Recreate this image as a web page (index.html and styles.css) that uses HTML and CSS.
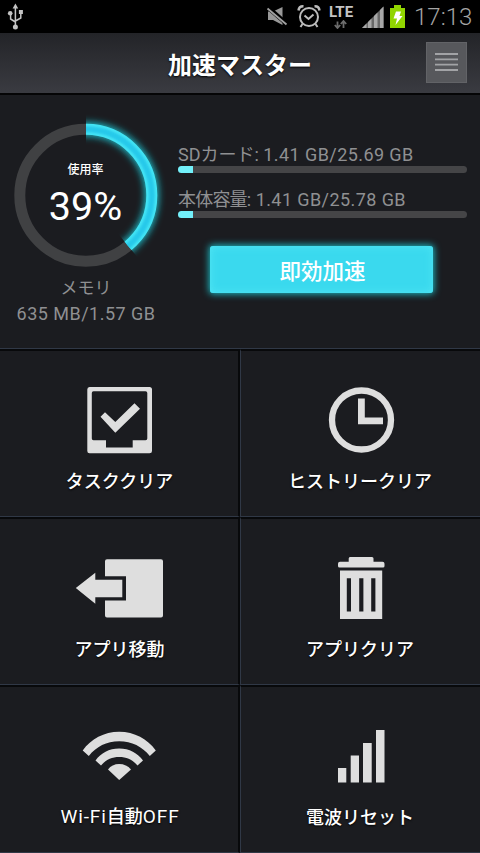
FILE: index.html
```html
<!DOCTYPE html>
<html lang="ja">
<head>
<meta charset="utf-8">
<title>加速マスター</title>
<link rel="stylesheet" href="styles.css">
</head>
<body>
<div class="screen">
  <div class="status">
    <svg class="usb" viewBox="6 2 20 29" width="20" height="29">
      <g fill="none" stroke="#c4c4c4" stroke-width="1.5">
        <path d="M15.4 7V26M15.4 22L10.6 19V14M15.4 21L20.8 18V13"/>
      </g>
      <g fill="#c4c4c4"><path d="M15.4 3.6L18.2 8.6H12.6Z"/><circle cx="10.2" cy="13.2" r="2.3"/><rect x="18.9" y="10" width="4" height="4"/><circle cx="15.4" cy="27" r="2.5"/></g>
    </svg>
    <div class="status-icons">
      <svg viewBox="266 4 22 24" width="22" height="24">
        <path d="M268 11.5H273L282.5 7V25L273 20H268Z" fill="#989898"/>
        <path d="M268 7.5L287 24" stroke="#000" stroke-width="4.5"/>
        <path d="M267.5 8.5L286.5 24.5" stroke="#a2a2a2" stroke-width="1.8"/>
      </svg>
      <svg class="alarm" viewBox="297 4 24 25" width="24" height="25">
        <g fill="none" stroke="#bcbcbc" stroke-width="2">
          <circle cx="309" cy="17" r="9"/><path d="M304.5 15.5L308.5 19L313.500 14.500M302.500 24L300.500 27M315.500 24L317.500 27"/>
          <path d="M298.500 10.500Q299 6 303.500 6.200M319.500 10.500Q319 6 314.500 6.200" stroke-width="2.500"/>
        </g>
      </svg>
      <div class="lte"><span>LTE</span>
        <svg viewBox="334 19 14 9" width="14" height="9"><g fill="none" stroke="#6c6c6c" stroke-width="1.800"><path d="M337.500 20.500V26M334.800 24L337.500 27L340.200 24M343.500 27V21M340.800 23L343.500 20L346.200 23"/></g></svg>
      </div>
      <svg class="cell" viewBox="361 6 24 23" width="24" height="23">
        <path d="M362 28L383.500 6.500V28Z" fill="#686868"/>
        <path d="M362 28L366.500 23.500V28ZM368 28V22L371.500 18.500V28ZM374 28V16L377.500 12.500V28ZM380 28V10L383.500 6.500V28Z" fill="#a8a8a8"/>
      </svg>
      <svg class="battery" viewBox="389 4 17 25" width="17" height="25">
        <path d="M394 5H401V8H405V28H390V8H394Z" fill="#91d500"/>
        <path d="M396 11.500H401L399.500 16H402.500L395.500 25L397 18.500H393.500Z" fill="#fff"/>
      </svg>
      <span class="time">17:13</span>
    </div>
  </div>
  <header class="header">
    <h1>加速マスター</h1>
    <button class="menu" aria-label="メニュー">
      <svg viewBox="0 0 23 20" width="23" height="20"><path d="M0 2H23M0 7.300H23M0 12.600H23M0 18H23" stroke="#a2a3a6" stroke-width="1.800"/></svg>
    </button>
  </header>
  <section class="overview">
    <div class="memory">
      <div class="gauge">
        <svg viewBox="0 0 172 172" width="172" height="172">
          <defs>
            <filter id="glow" x="-20%" y="-20%" width="140%" height="140%"><feGaussianBlur stdDeviation="3.500"/></filter>
            <filter id="soft"><feGaussianBlur stdDeviation="1.200"/></filter>
            <clipPath id="sector"><path d="M86 86V0H172V172H157.200Z"/></clipPath>
          </defs>
          <circle cx="85.800" cy="86.200" r="66" fill="none" stroke="#404143" stroke-width="11"/>
          <g clip-path="url(#sector)" fill="none">
            <circle cx="85.800" cy="86.200" r="66" stroke="#1cb6c2" stroke-width="14" filter="url(#glow)"/>
            <circle cx="85.800" cy="86.200" r="66" stroke="#45e5f5" stroke-width="11"/>
            <circle cx="85.800" cy="86.200" r="66" stroke="#28c9ea" stroke-width="6" filter="url(#soft)"/>
          </g>
        </svg>
        <div class="gauge-text"><span class="rate">使用率</span><span class="percent">39%</span></div>
      </div>
      <div class="mem-label">メモリ</div>
      <div class="mem-value">635 MB/1.57 GB</div>
    </div>
    <div class="storage">
      <div class="store"><div class="store-text">SDカード: <span class="amount">1.41 GB/25.69 GB</span></div><div class="bar"><div class="fill"></div></div></div>
      <div class="store"><div class="store-text"><span class="kanji">本体容量</span>: <span class="amount">1.41 GB/25.78 GB</span></div><div class="bar"><div class="fill"></div></div></div>
      <button class="boost">即効加速</button>
    </div>
  </section>
  <main class="grid">
    <div class="tile">
      <svg viewBox="70 380 100 80" width="100" height="80">
        <path fill="#dedede" fill-rule="evenodd" d="M89.500 387H149.500Q152 387 152 389.500V451Q152 453.300 149.500 453.300H89.500Q87.300 453.300 87.300 451V389.500Q87.300 387 89.500 387ZM93.500 391.200Q91.800 391.200 91.800 393V438.500Q91.800 440.300 93.500 440.300H106V447.500H132.700V440.300H145.500Q147.300 440.300 147.300 438.500V393Q147.300 391.200 145.500 391.200Z"/>
        <path fill="#dedede" d="M100.500 416.800L105 412.300L115.300 422L134.500 403.300L140 408.800L115.300 432.800Z"/>
      </svg>
      <span class="name nudge">タスククリア</span>
    </div>
    <div class="tile">
      <svg viewBox="310 380 100 80" width="100" height="80">
        <circle cx="361.500" cy="420" r="29.500" fill="none" stroke="#dedede" stroke-width="6.300"/>
        <path fill="#dedede" d="M358 398.500H364.800V417.500H383V424.300H358Z"/>
      </svg>
      <span class="name">ヒストリークリア</span>
    </div>
    <div class="tile">
      <svg viewBox="70 548 100 80" width="100" height="80">
        <path fill="#dedede" d="M107 559.300H161Q163 559.300 163 561.300V615.500Q163 617.500 161 617.500H107Q105 617.500 105 615.500V600.500H126V576.300H105V561.300Q105 559.300 107 559.300Z"/>
        <path fill="#dedede" d="M75.800 588L95.300 572.700V579.800H122.300V597.300H95.300V603.700Z"/>
      </svg>
      <span class="name nudge">アプリ移動</span>
    </div>
    <div class="tile">
      <svg viewBox="310 548 100 80" width="100" height="80">
        <path fill="#dedede" d="M350 557H372Q373.500 557 373.500 558.500V561.700H382.500Q384.500 561.700 384.500 563.700V566Q384.500 567.500 383 567.500H339.500Q338 567.500 338 566V563.700Q338 561.700 340 561.700H348.700V558.500Q348.700 557 350 557Z"/>
        <path fill="#dedede" fill-rule="evenodd" d="M340 570.500H382.200V619H340ZM346.800 578.300V611.500H351V578.300ZM359.200 578.300V611.500H363.400V578.300ZM371.200 578.300V611.500H375.400V578.300Z"/>
      </svg>
      <span class="name">アプリクリア</span>
    </div>
    <div class="tile">
      <svg viewBox="70 716 100 80" width="100" height="80">
        <path fill="#dedede" d="M82.700 750.500C91 739 104 731.800 119.200 731.800S147.500 739 155.800 750.500L149.800 756C142 746.500 132 741.300 119.200 741.300S96.500 746.500 88.800 756Z"/>
        <path fill="#dedede" d="M95.500 760.500C101 753 109 748.500 119.200 748.500S137.500 753 143 760.500L137.500 765.500C133 760 127 757 119.200 757S105.500 760 101 765.500Z"/>
        <path fill="#dedede" d="M108 769.500Q112 764 119.200 764T131 769.500L119.200 780Z"/>
      </svg>
      <span class="name wifi">Wi-Fi<span class="kanji">自動</span>OFF</span>
    </div>
    <div class="tile">
      <svg viewBox="310 716 100 80" width="100" height="80">
        <path fill="#dedede" d="M338 768H346.300V782.500H338ZM350.700 755.500H359V782.500H350.700ZM363 743H371.700V782.500H363ZM376 730H384.500V782.500H376Z"/>
      </svg>
      <span class="name">電波リセット</span>
    </div>
  </main>
</div>
</body>
</html>
```
FILE: styles.css
```css
* { box-sizing: border-box; }
body { margin: 0; background: #1b1c20; font-family: Roboto, "Noto Sans CJK JP", sans-serif; }
button { border: 0; padding: 0; font: inherit; }
.screen { width: 480px; height: 853px; overflow: hidden; }
svg { display: block; flex: none; }

.status { height: 33px; background: #000; display: flex; justify-content: space-between; align-items: flex-start; padding: 2px 8px 0 6px; }
.status-icons { display: flex; align-items: flex-start; padding-top: 2px; }
.alarm { margin-left: 9px; }
.lte { width: 24px; margin-left: 8px; display: flex; flex-direction: column; align-items: center; color: #c4c4c4; font-size: 15px; font-weight: 700; line-height: 16px; }
.cell { margin: 2px 0 0 8px; }
.battery { margin-left: 4px; }
.time { width: 58px; margin-left: 8px; color: #a5a5a5; font-size: 24px; font-weight: 300; line-height: 26px; white-space: nowrap; }

.header { height: 62px; display: flex; align-items: center; justify-content: flex-end; padding: 0 13px 2px 0; background: linear-gradient(#232428, #3a3b41); border-bottom: 2px solid #050506; }
.header h1 { flex: 1; margin: 0 -67px 0 0; padding-top: 8px; text-align: center; color: #fff; font-size: 24px; font-weight: 700; line-height: 30px; text-shadow: 0 1px 2px #000; }
.menu { width: 41px; height: 41px; margin-left: 13px; background: #57585c; border: 1px solid #626367; display: flex; align-items: center; justify-content: center; }

.overview { height: 254px; display: flex; border-bottom: 1px solid #303846; }
.memory { width: 172px; padding-top: 14px; text-align: center; color: #8f9092; }
.gauge { display: grid; height: 172px; }
.gauge > * { grid-area: 1 / 1; }
.gauge-text { display: flex; flex-direction: column; align-items: center; padding: 53px 1px 0 0; color: #fff; }
.rate { font-size: 12px; line-height: 16px; font-weight: 500; }
.percent { font-size: 39.5px; line-height: 46px; margin-top: 6px; }
.mem-label { font-size: 17px; line-height: 20px; margin-top: -3px; }
.mem-value { font-size: 18px; line-height: 24px; margin-top: 4px; letter-spacing: .48px; white-space: nowrap; }
.storage { width: 289px; margin-left: 6px; padding-top: 48px; }
.store { height: 45px; }
.store-text { color: #8f9092; font-size: 18px; line-height: 23px; white-space: nowrap; }
.store-text .kanji { letter-spacing: -.8px; }
.amount { letter-spacing: .42px; }
.bar { height: 7px; border-radius: 4px; background: #454547; overflow: hidden; }
.fill { width: 15px; height: 7px; background: #72f0fa; }
.boost { display: block; width: 223px; height: 47px; margin: 13px 0 0 32px; padding: 5px 0 0 2px; border-radius: 3px; background: #3ad9ee; color: #fff; font-size: 21.5px; font-weight: 500; line-height: 42px; box-shadow: 0 0 7px 1px #1cbcc6, inset 0 0 8px #53e7f4; }

.grid { display: grid; grid-template-columns: 240px 240px; grid-auto-rows: 168px; }
.tile { display: flex; flex-direction: column; align-items: center; padding-top: 29px; border-top: 2px solid #08090b; border-bottom: 1px solid #303846; }
.tile:nth-child(odd) { border-right: 2px solid #08090b; padding-left: 2px; }
.tile:nth-child(even) { border-left: 1px solid #303846; padding-right: 1px; }
.name { color: #fff; font-size: 18px; font-weight: 500; line-height: 24px; margin-top: 10px; text-shadow: 0 1px 2px #000; white-space: nowrap; }
.nudge { padding-right: 1px; }
.wifi { margin-top: 9px; font-size: 19px; font-weight: 400; letter-spacing: .9px; }
.wifi .kanji { font-size: 18px; font-weight: 500; letter-spacing: 0; }
```
